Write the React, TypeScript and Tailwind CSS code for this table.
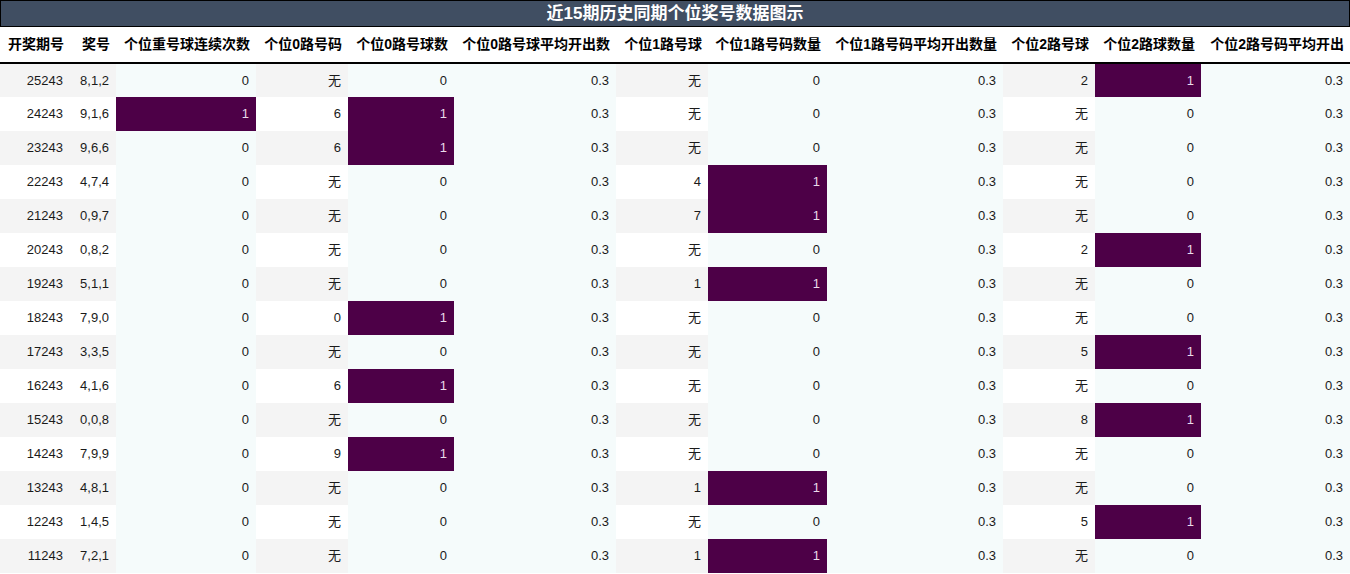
import React from "react";

const widths = [70, 46, 140, 92, 106, 162, 92, 119, 176, 92, 106, 149];
const headers = [
  "开奖期号",
  "奖号",
  "个位重号球连续次数",
  "个位0路号码",
  "个位0路号球数",
  "个位0路号球平均开出数",
  "个位1路号球",
  "个位1路号码数量",
  "个位1路号码平均开出数量",
  "个位2路号球",
  "个位2路球数量",
  "个位2路号码平均开出",
];

type Row = [string, string, number, string, number, string, number, string, number];
const rows: Row[] = [
  ["25243", "8,1,2", 0, "无", 0, "无", 0, "2", 1],
  ["24243", "9,1,6", 1, "6", 1, "无", 0, "无", 0],
  ["23243", "9,6,6", 0, "6", 1, "无", 0, "无", 0],
  ["22243", "4,7,4", 0, "无", 0, "4", 1, "无", 0],
  ["21243", "0,9,7", 0, "无", 0, "7", 1, "无", 0],
  ["20243", "0,8,2", 0, "无", 0, "无", 0, "2", 1],
  ["19243", "5,1,1", 0, "无", 0, "1", 1, "无", 0],
  ["18243", "7,9,0", 0, "0", 1, "无", 0, "无", 0],
  ["17243", "3,3,5", 0, "无", 0, "无", 0, "5", 1],
  ["16243", "4,1,6", 0, "6", 1, "无", 0, "无", 0],
  ["15243", "0,0,8", 0, "无", 0, "无", 0, "8", 1],
  ["14243", "7,9,9", 0, "9", 1, "无", 0, "无", 0],
  ["13243", "4,8,1", 0, "无", 0, "1", 1, "无", 0],
  ["12243", "1,4,5", 0, "无", 0, "无", 0, "5", 1],
  ["11243", "7,2,1", 0, "无", 0, "1", 1, "无", 0],
];

function Stripe({ i, children }: { i: number; children: React.ReactNode }) {
  return (
    <td className={`h-[34px] pr-[7px] text-right ${i % 2 === 0 ? "bg-[#f4f4f4]" : "bg-white"}`}>
      {children}
    </td>
  );
}

function Cyan({ children }: { children: React.ReactNode }) {
  return <td className="h-[34px] pr-[7px] text-right bg-[#f5fbfb]">{children}</td>;
}

function Count({ v }: { v: number }) {
  return v === 1 ? (
    <td className="h-[34px] pr-[7px] text-right bg-[#4d0047] text-[#eadcea]">{v}</td>
  ) : (
    <td className="h-[34px] pr-[7px] text-right bg-[#f5fbfb]">{v}</td>
  );
}

export default function App() {
  return (
    <div
      className="w-[1350px] h-[574px] overflow-hidden bg-white text-[#1a1a1a]"
      style={{ fontFamily: '"Liberation Sans", "Noto Sans CJK SC", sans-serif' }}
    >
      <div className="h-[27px] border border-black bg-[#404e62] flex items-center justify-center text-white text-[17px] font-bold">
        近15期历史同期个位奖号数据图示
      </div>
      <table className="table-fixed border-collapse w-[1350px] text-[13px]">
        <colgroup>
          {widths.map((w, i) => (
            <col key={i} style={{ width: w }} />
          ))}
        </colgroup>
        <thead>
          <tr className="h-[36px] border-b-2 border-black">
            {headers.map((h) => (
              <th
                key={h}
                className="pr-[6px] text-right text-[14px] font-bold text-black whitespace-nowrap overflow-hidden"
              >
                {h}
              </th>
            ))}
          </tr>
        </thead>
        <tbody>
          {rows.map((r, i) => (
            <tr key={r[0]}>
              <Stripe i={i}>{r[0]}</Stripe>
              <Stripe i={i}>{r[1]}</Stripe>
              <Count v={r[2]} />
              <Stripe i={i}>{r[3]}</Stripe>
              <Count v={r[4]} />
              <Cyan>0.3</Cyan>
              <Stripe i={i}>{r[5]}</Stripe>
              <Count v={r[6]} />
              <Cyan>0.3</Cyan>
              <Stripe i={i}>{r[7]}</Stripe>
              <Count v={r[8]} />
              <Cyan>0.3</Cyan>
            </tr>
          ))}
        </tbody>
      </table>
    </div>
  );
}
